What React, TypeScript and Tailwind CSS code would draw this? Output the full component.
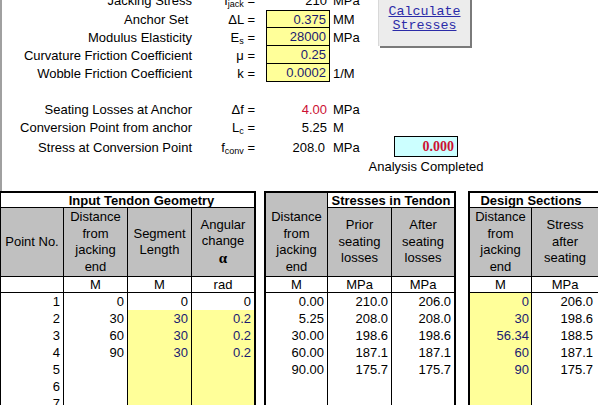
import React from 'react'

const grid = 'grid grid-cols-[64px_64px_64px_64px_8px_64px_64px_64px_12px_64px_66px]'

type Param = {
   label: string
   sym: React.ReactNode
   value: string
   unit: string
   h: string
   input?: boolean
   first?: boolean
   red?: boolean
}

const params: Param[] = [
   { label: 'Jacking Stress', sym: <>f<sub className="text-[9px]">jack</sub> =</>, value: '210', unit: 'MPa', h: 'h-[19px]' },
   { label: 'Anchor Set\u00a0', sym: <>ΔL =</>, value: '0.375', unit: 'MM', h: 'h-[18px]', input: true, first: true },
   { label: 'Modulus Elasticity', sym: <>E<sub className="text-[9px]">s</sub> =</>, value: '28000', unit: 'MPa', h: 'h-[18px]', input: true },
   { label: 'Curvature Friction Coefficient', sym: <>μ =</>, value: '0.25', unit: '', h: 'h-[18px]', input: true },
   { label: 'Wobble Friction Coefficient', sym: <>k =</>, value: '0.0002', unit: '1/M', h: 'h-[18px]', input: true },
]

const results: Param[] = [
   { label: 'Seating Losses at Anchor', sym: <>Δf =</>, value: '4.00', unit: 'MPa', h: 'h-[18px]', red: true },
   { label: 'Conversion Point from anchor', sym: <>L<sub className="text-[9px]">c</sub> =</>, value: '5.25', unit: 'M', h: 'h-[19px]' },
]

const data = [
   ['1', '0', '0', '0', '0.00', '210.0', '206.0', '0', '206.0'],
   ['2', '30', '30', '0.2', '5.25', '208.0', '208.0', '30', '198.6'],
   ['3', '60', '30', '0.2', '30.00', '198.6', '198.6', '56.34', '188.5'],
   ['4', '90', '30', '0.2', '60.00', '187.1', '187.1', '60', '187.1'],
   ['5', '', '', '', '90.00', '175.7', '175.7', '90', '175.7'],
   ['6', '', '', '', '', '', '', '', ''],
   ['7', '', '', '', '', '', '', '', ''],
]

const ParamRow: React.FC<{ p: Param }> = ({ p }) => (
   <div className={`${grid} ${p.h} leading-none items-center`}>
      <div className="col-span-3 text-right pr-[2px] whitespace-nowrap">{p.label}</div>
      <div className="text-right pr-[3px] whitespace-nowrap">{p.sym}</div>
      <div />
      <div
         className={`h-full flex items-center justify-end pr-[3px] ${p.input ? 'bg-[#ffff99] border-x border-b border-black text-[#1a1a70]' : ''} ${p.first ? 'border-t' : ''} ${p.red ? 'text-[#cc1133]' : ''}`}
      >
         {p.value}
      </div>
      <div className="pl-[3px]">{p.unit}</div>
   </div>
)

const Header: React.FC<{ lines: React.ReactNode[]; cls: string }> = ({ lines, cls }) => (
   <div className={`bg-[#c0c0c0] border-b border-black flex flex-col items-center justify-center text-center leading-[16.5px] ${cls}`}>
      {lines.map((l, i) => (
         <div key={i}>{l}</div>
      ))}
   </div>
)

const App: React.FC = () => {
   return (
      <div className="w-[598px] h-[405px] overflow-hidden bg-white text-black text-[13px] font-['Liberation_Sans',Arial,sans-serif]">
         <div className="relative -mt-[9px] border-l-2 border-[#a0a0a0]">
            {params.map((p, i) => (
               <ParamRow key={i} p={p} />
            ))}
            <div className="h-[18px]" />
            {results.map((p, i) => (
               <ParamRow key={i} p={p} />
            ))}

            <div className={`${grid} h-[20px] items-center leading-none`}>
               <div className="col-span-3 text-right pr-[2px] whitespace-nowrap">Stress at Conversion Point</div>
               <div className="text-right pr-[3px] whitespace-nowrap">
                  f<sub className="text-[9px]">conv</sub> =
               </div>
               <div />
               <div className="text-right pr-[5px]">208.0</div>
               <div className="pl-[3px]">MPa</div>
               <div className="h-[21px] -mt-px bg-[#ccffff] border border-black flex items-center justify-end pr-[3px] font-['Liberation_Serif',serif] font-bold text-[14px] text-[#cc1133]">
                  0.000
               </div>
            </div>
            <div className={`${grid} h-[18px] items-center`}>
               <div className="col-start-8 flex justify-center whitespace-nowrap">Analysis Completed</div>
            </div>
            <div className="h-[16px]" />

            {/* floating sheet button */}
            <div className="absolute left-[376px] top-0 w-[92px] h-[55px] bg-[#ececec] border-l border-t border-[#d8d8d8] shadow-[2px_2px_0_#7a7a7a] flex flex-col items-center justify-end pb-[13px] font-['Liberation_Mono',monospace] text-[13.33px] leading-[14px] text-[#2b2ba8] underline">
               <span>Calculate</span>
               <span>Stresses</span>
            </div>
         </div>

         {/* title row */}
         <div className={`${grid} h-[17px] leading-none font-bold`}>
            <div className="col-span-4 border-t-2 border-l border-r-2 border-b border-black flex items-center justify-center pl-[28px]">
               Input Tendon Geometry
            </div>
            <div />
            <div className="bg-[#c0c0c0] border-t-2 border-l-2 border-r border-black" />
            <div className="col-span-2 border-t-2 border-r-2 border-b border-black flex items-center justify-center">
               Stresses in Tendon
            </div>
            <div />
            <div className="col-span-2 border-t-2 border-l-2 border-b border-black flex items-center justify-center pr-[6px]">
               Design Sections
            </div>
         </div>

         {/* header row */}
         <div className={`${grid} h-[69px]`}>
            <Header cls="border-l border-r" lines={['Point No.']} />
            <Header cls="border-r" lines={['Distance', 'from', 'jacking', 'end']} />
            <Header cls="border-r" lines={['Segment', 'Length']} />
            <Header
               cls="border-r-2"
               lines={['Angular', 'change', <span className="font-['Liberation_Serif',serif] font-bold text-[15px]">α</span>]}
            />
            <div />
            <Header cls="border-l-2 border-r" lines={['Distance', 'from', 'jacking', 'end']} />
            <Header cls="border-r" lines={['Prior', 'seating', 'losses']} />
            <Header cls="border-r-2" lines={['After', 'seating', 'losses']} />
            <div />
            <Header cls="border-l-2 border-r" lines={['Distance', 'from', 'jacking', 'end']} />
            <Header cls="" lines={['Stress', 'after', 'seating']} />
         </div>

         {/* units row */}
         <div className={`${grid} h-[16px] leading-[15px] text-center`}>
            <div className="border-l border-r border-b border-black" />
            <div className="border-r border-b border-black">M</div>
            <div className="border-r border-b border-black">M</div>
            <div className="border-r-2 border-b border-black">rad</div>
            <div />
            <div className="border-l-2 border-r border-b border-black">M</div>
            <div className="border-r border-b border-black">MPa</div>
            <div className="border-r-2 border-b border-black">MPa</div>
            <div />
            <div className="border-l-2 border-r border-b border-black">M</div>
            <div className="border-b border-black">MPa</div>
         </div>

         {data.map((r, i) => (
            <div key={i} className={`${grid} h-[17px] leading-[17px] text-right`}>
               <div className="border-l border-r border-black pr-[3px]">{r[0]}</div>
               <div className="border-r border-black pr-[3px]">{r[1]}</div>
               <div className={`border-r border-black pr-[3px] ${i > 0 ? 'bg-[#ffff99] text-[#1a1a70]' : ''}`}>{r[2]}</div>
               <div className={`border-r-2 border-black pr-[3px] ${i > 0 ? 'bg-[#ffff99] text-[#1a1a70]' : ''}`}>{r[3]}</div>
               <div />
               <div className="border-l-2 border-r border-black pr-[3px]">{r[4]}</div>
               <div className="border-r border-black pr-[3px]">{r[5]}</div>
               <div className="border-r-2 border-black pr-[3px]">{r[6]}</div>
               <div />
               <div className="border-l-2 border-r border-black pr-[2px] bg-[#ffff99] text-[#1a1a70]">{r[7]}</div>
               <div className="pr-[5px]">{r[8]}</div>
            </div>
         ))}
      </div>
   )
}

export default App
